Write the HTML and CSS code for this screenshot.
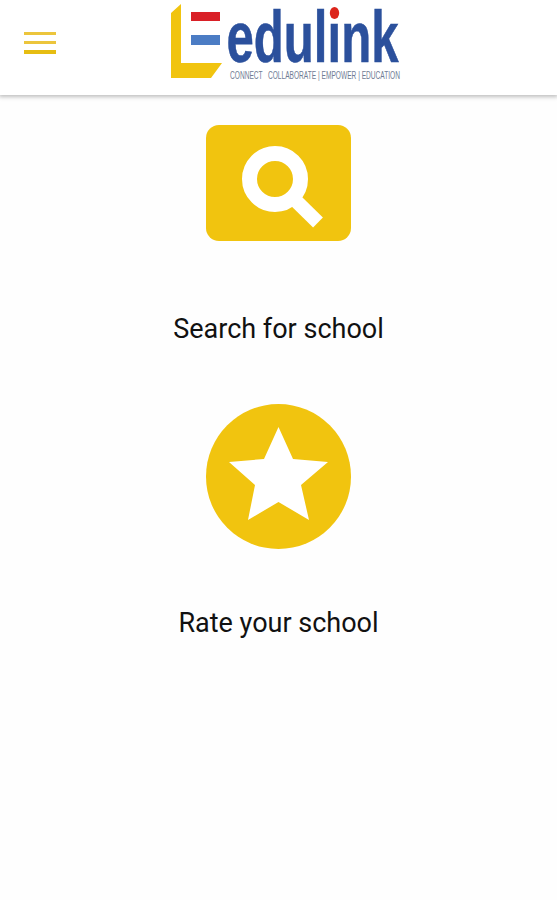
FILE: index.html
```html
<!DOCTYPE html>
<html lang="en">

<head>
    <meta charset="UTF-8">
    <meta name="viewport" content="width=device-width, initial-scale=1.0">
    <title>Edulink</title>
    <link rel="stylesheet" href="styles.css">
</head>

<body>
    <header class="header">
        <button class="menu" aria-label="Menu">
            <span></span>
            <span></span>
            <span></span>
        </button>
        <svg class="logo" width="250" height="90" viewBox="0 0 250 90">
            <path fill="#f1c40f" d="M4 13 14 4V63H55L44 78H4Z" />
            <rect x="24" y="12" width="29" height="9" fill="#d92027" />
            <rect x="24" y="35" width="29" height="10" fill="#4b7cc4" />
            <text class="logo-name" x="59.500" y="62" textLength="172" lengthAdjust="spacingAndGlyphs">edulink</text>
            <rect x="162" y="4" width="11" height="17" fill="#fff" />
            <ellipse cx="167.500" cy="13" rx="4.700" ry="6" fill="#dc251c" />
            <text class="logo-tag" x="63" y="79" textLength="170" lengthAdjust="spacingAndGlyphs" xml:space="preserve">CONNECT   COLLABORATE | EMPOWER | EDUCATION</text>
        </svg>
    </header>

    <main class="main">
        <a class="item">
            <svg width="145" height="116" viewBox="0 0 145 116">
                <rect width="145" height="116" rx="13" fill="#f1c40f" />
                <circle cx="69" cy="54" r="25.500" fill="none" stroke="#fff" stroke-width="15" />
                <path d="M86 72 112 97.500" stroke="#fff" stroke-width="14" />
            </svg>
            <p class="search-text">Search for school</p>
        </a>
        <a class="item">
            <svg width="145" height="145" viewBox="0 0 145 145">
                <circle cx="72.500" cy="72.500" r="72.500" fill="#f1c40f" />
                <path fill="#fff" d="M72.500 23 87 55 122 58 95 81 103 116 72.500 98 42 116 49 81 23 58 58 55Z" />
            </svg>
            <p class="rate-text">Rate your school</p>
        </a>
    </main>
</body>

</html>
```
FILE: styles.css
```css
* {
    margin: 0;
    padding: 0;
    box-sizing: border-box;
}
body {
    font-family: Roboto, "Liberation Sans", sans-serif;
    background-color: #fefefe;
    color: #111;
}
.header {
    display: flex;
    align-items: flex-start;
    height: 95px;
    padding-left: 24px;
    background-color: #fff;
    box-shadow: 0 1px 4px 1px rgba(0, 0, 0, 0.25);
}
.menu {
    display: flex;
    flex-direction: column;
    gap: 6px;
    width: 32px;
    margin-top: 32px;
    border: 0;
    background: none;
    cursor: pointer;
}
.menu span {
    width: 32px;
    height: 3px;
    background-color: #ecc53c;
}
.menu span:last-child {
    height: 4px;
    background-color: #e6bd12;
}
.logo {
    margin-left: 111px;
}
.logo-name {
    font-family: "Liberation Sans", sans-serif;
    font-size: 72px;
    font-weight: 700;
    fill: #2b509c;
    stroke: #2b509c;
    stroke-width: 0.6px;
}
.logo-tag {
    font-family: "Liberation Sans", sans-serif;
    font-size: 10px;
    fill: #6f7c94;
}
.main {
    display: flex;
    flex-direction: column;
    align-items: center;
    gap: 58px;
    padding-top: 30px;
}
.item {
    display: flex;
    flex-direction: column;
    align-items: center;
}
.item p {
    font-size: 27px;
    line-height: 34px;
    white-space: nowrap;
}
.search-text {
    margin-top: 71px;
}
.rate-text {
    margin-top: 57px;
}
```
